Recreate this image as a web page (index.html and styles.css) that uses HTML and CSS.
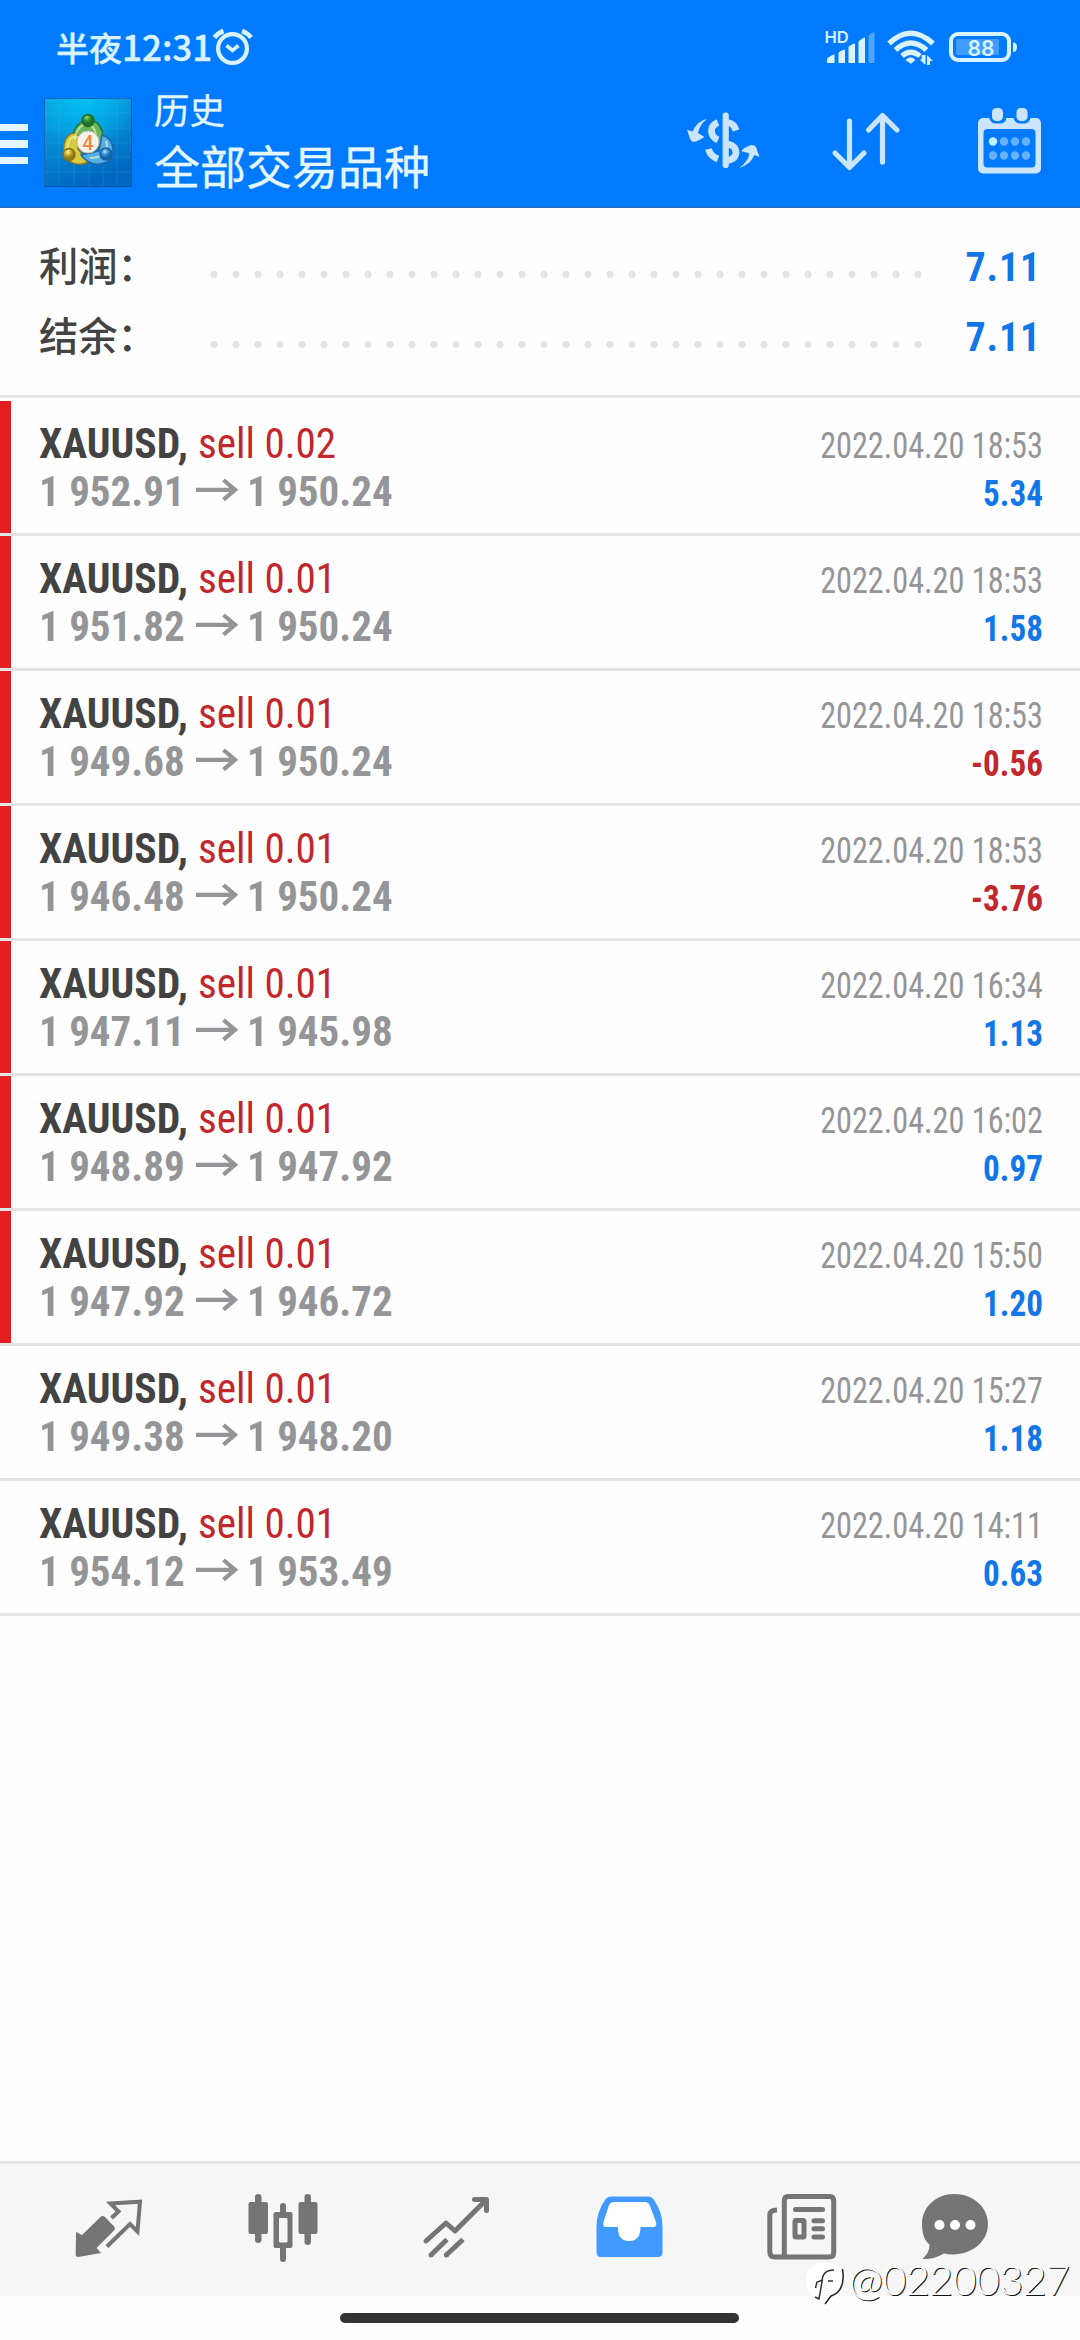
FILE: index.html
```html
<!DOCTYPE html>
<html lang="zh-CN">
<head>
<meta charset="utf-8">
<title>历史</title>
<link rel="stylesheet" href="styles.css">
</head>
<body>
<svg class="defs" width="0" height="0">
  <symbol id="arrow" viewBox="0 0 42 24"><path d="M0 11.8H39M27.5 2L39 11.8L27.5 21.6" fill="none" stroke="#939598" stroke-width="4.2"/></symbol>
</svg>
<div class="screen">
  <header class="header">
    <div class="status">
      <span class="clock">半夜<span class="digits">12:31</span></span>
      <svg class="alarm" width="42" height="40" viewBox="211 27 42 40" fill="none" stroke="#d8f3ff">
        <circle cx="231.500" cy="48.500" r="14.400" stroke-width="4.200"/>
        <path d="M225.500 45.500L231.500 50.500L237.500 45.500" stroke-width="3.600"/>
        <path d="M213.500 37.500Q217 33 222.500 31M241 31Q246.500 33 250 37.500" stroke-width="4.600"/>
      </svg>
      <svg class="indicators" width="200" height="44" viewBox="820 26 200 44" fill="#d8f3ff">
        <text x="824.500" y="43" class="hd">HD</text>
        <path d="M827 63V59Q829 56 834.500 54.500V63ZM838.500 63V53Q840 50.500 845 49.500V63ZM848.500 63V47Q850 44.500 855 43.500V63ZM858.500 63V42Q860 39 865 37.500V63Z"/>
        <path d="M868.500 63V36Q870 33 874.500 32V63Z" opacity=".36"/>
        <g fill="none" stroke="#d8f3ff" stroke-width="5.200">
          <path d="M889 43.500Q910.500 23 933 43.500M895.500 50Q910.500 36 926.500 50M902 56Q910.500 48.500 920 56"/>
        </g>
        <path d="M905.500 60Q910.500 54.500 915.500 60L911 63.800ZM921.700 55H925.500V65L919.500 59.500H921.700ZM927 65V55L933 61H930V65Z"/>
        <rect x="951" y="34" width="58" height="26" rx="7" fill="none" stroke="#d8f3ff" stroke-width="4"/>
        <rect x="956" y="39" width="43" height="16" rx="1" fill="#409dff"/>
        <path d="M1013 42.500Q1017 42.500 1017 47Q1017 52 1013 52Z"/>
        <text x="967.500" y="55.500" class="charge">88</text>
      </svg>
    </div>
    <div class="appbar">
      <div class="menu"><i></i><i></i><i></i></div>
      <svg class="logo" width="88" height="89" viewBox="0 0 88 89">
        <defs>
          <linearGradient id="sky" x2=".35" y2="1"><stop stop-color="#0ba5e0"/><stop offset=".5" stop-color="#058bd4"/><stop offset="1" stop-color="#0067be"/></linearGradient>
          <radialGradient id="glow" cx=".45" cy="0" r=".6"><stop stop-color="#00c0f4"/><stop offset="1" stop-color="#00c0f4" stop-opacity="0"/></radialGradient>
          <radialGradient id="green" cx=".4" cy=".25"><stop stop-color="#a4d58a"/><stop offset=".5" stop-color="#399c3d"/><stop offset="1" stop-color="#1e702c"/></radialGradient>
          <radialGradient id="gold" cx=".4" cy=".3"><stop stop-color="#fff3a5"/><stop offset=".5" stop-color="#ccb52e"/><stop offset="1" stop-color="#8d7a18"/></radialGradient>
          <radialGradient id="blue" cx=".4" cy=".3"><stop stop-color="#b8e6ff"/><stop offset=".5" stop-color="#3a94d8"/><stop offset="1" stop-color="#1665ac"/></radialGradient>
        </defs>
        <path fill="url(#sky)" d="M0 0H88V89H0Z"/><path fill="url(#glow)" d="M0 0H88V89H0Z"/>
        <path d="M15 0V89M30 0V89M45 0V89M59 0V89M73 0V89M0 15H88M0 30H88M0 45H88M0 59H88M0 74H88" stroke="#3fc2ff" opacity=".2"/>
        <path d="M0 .5H88M.5 0V89" stroke="#1768b6"/>
        <path d="M0 88.500H88M87.500 0V89" stroke="#0758aa"/>
        <g stroke-width="1.500">
          <path d="M28 42C30 16 60 15 59 42L55 50L43 36Z" fill="#68b65c" stroke="#237338"/>
          <path d="M33 35C18 33 16 58 25 63C31 67 38 67 44 64L34 51Z" fill="#d9cb3c" stroke="#8b7b20"/>
          <path d="M58 37C70 40 73 58 63 64C53 69 43 65 37 57L55 53Z" fill="#55aee5" stroke="#1c68a8"/>
          <path d="M31 42C33 22 50 22 52 37M23 53C24 39 29 38 35 39M62 43C65 50 61 60 46 60" fill="none" stroke="#e8f7bd" opacity=".65" stroke-width="2"/>
          <circle cx="44" cy="22.500" r="6" fill="url(#green)" stroke="#1e6e2c"/>
          <circle cx="25" cy="56.500" r="6" fill="url(#gold)" stroke="#857218"/>
          <circle cx="62" cy="56" r="6" fill="url(#blue)" stroke="#1463a6"/>
        </g>
        <circle cx="44" cy="44" r="11" fill="#f4f3ee" stroke="#c8bea6"/>
        <text x="44" y="51.500" class="four">4</text>
      </svg>
      <div class="titles"><div class="subtitle">历史</div><div class="title">全部交易品种</div></div>
      <div class="actions">
        <svg width="76" height="68" viewBox="684 106 76 68" fill="#cce5ff">
          <path d="M706 119Q699 124 697 133L703.500 137Q699 140 695 141.500Q690.500 143 689 139L686 129.500Q690 132 692 131Q696 121 706 119ZM738 168Q747 162 748.500 153.500L740 151Q744 147 750 145Q753.500 144.500 755 147L758.500 157L753.500 155Q749 165 738 168Z"/>
          <path d="M717 122.500Q710.500 125 710.500 131Q710.500 137 717 140M707.500 149Q709 156 717 159M727 122.500Q733 123.500 735 130.500M727 144Q735 146 735 152.500Q735 158.500 727 160.500" fill="none" stroke="#cce5ff" stroke-width="6.800"/>
          <path d="M724.700 115.500V165" stroke="#cce5ff" stroke-width="6.200" stroke-linecap="round"/>
        </svg>
        <svg class="sort" width="70" height="68" viewBox="830 106 70 68" fill="none" stroke="#cce5ff" stroke-width="5.200" stroke-linecap="round" stroke-linejoin="round">
          <path d="M848.500 121V167M834 153L848.500 167.500L863 153M881.500 162V116M867.500 130L881.500 115.500L896 130"/>
        </svg>
        <svg width="66" height="68" viewBox="976 106 66 68">
          <rect x="977" y="118" width="63" height="55.500" rx="5" fill="#cce5ff"/>
          <rect x="982.500" y="129" width="52" height="38.500" rx="4" fill="#007aff"/>
          <path d="M988 118H1005V120Q1003 123.500 999 123.500H995Q990 123.500 988 118ZM1012.500 118H1029.500Q1028 123.500 1023 123.500H1019Q1014 123.500 1012.500 118Z" fill="#007aff"/>
          <rect x="991" y="108" width="11" height="13" rx="4.500" fill="#cce5ff"/><rect x="1015.500" y="108" width="11" height="13" rx="4.500" fill="#cce5ff"/>
          <circle cx="992" cy="141.500" r="4.200" fill="#c2f0ff"/>
          <g fill="#66b2ff"><circle cx="1003" cy="141.500" r="4.200"/><circle cx="1014" cy="141.500" r="4.200"/><circle cx="1025" cy="141.500" r="4.200"/><circle cx="992" cy="155.500" r="4.200"/><circle cx="1003" cy="155.500" r="4.200"/><circle cx="1014" cy="155.500" r="4.200"/><circle cx="1025" cy="155.500" r="4.200"/></g>
        </svg>
      </div>
    </div>
  </header>

  <section class="summary">
    <div class="total"><span class="label">利润：</span><span class="dots"></span><b>7.11</b></div>
    <div class="total"><span class="label">结余：</span><span class="dots"></span><b>7.11</b></div>
  </section>

  <main class="deals">
    <div class="deal marked"><div class="left"><div class="name"><b>XAUUSD,</b><span>sell 0.02</span></div><div class="price"><span>1 952.91</span><svg><use href="#arrow"/></svg><span>1 950.24</span></div></div><div class="right"><div class="date">2022.04.20 18:53</div><div class="profit">5.34</div></div></div>
    <div class="deal marked"><div class="left"><div class="name"><b>XAUUSD,</b><span>sell 0.01</span></div><div class="price"><span>1 951.82</span><svg><use href="#arrow"/></svg><span>1 950.24</span></div></div><div class="right"><div class="date">2022.04.20 18:53</div><div class="profit">1.58</div></div></div>
    <div class="deal marked"><div class="left"><div class="name"><b>XAUUSD,</b><span>sell 0.01</span></div><div class="price"><span>1 949.68</span><svg><use href="#arrow"/></svg><span>1 950.24</span></div></div><div class="right"><div class="date">2022.04.20 18:53</div><div class="profit loss">-0.56</div></div></div>
    <div class="deal marked"><div class="left"><div class="name"><b>XAUUSD,</b><span>sell 0.01</span></div><div class="price"><span>1 946.48</span><svg><use href="#arrow"/></svg><span>1 950.24</span></div></div><div class="right"><div class="date">2022.04.20 18:53</div><div class="profit loss">-3.76</div></div></div>
    <div class="deal marked"><div class="left"><div class="name"><b>XAUUSD,</b><span>sell 0.01</span></div><div class="price"><span>1 947.11</span><svg><use href="#arrow"/></svg><span>1 945.98</span></div></div><div class="right"><div class="date">2022.04.20 16:34</div><div class="profit">1.13</div></div></div>
    <div class="deal marked"><div class="left"><div class="name"><b>XAUUSD,</b><span>sell 0.01</span></div><div class="price"><span>1 948.89</span><svg><use href="#arrow"/></svg><span>1 947.92</span></div></div><div class="right"><div class="date">2022.04.20 16:02</div><div class="profit">0.97</div></div></div>
    <div class="deal marked"><div class="left"><div class="name"><b>XAUUSD,</b><span>sell 0.01</span></div><div class="price"><span>1 947.92</span><svg><use href="#arrow"/></svg><span>1 946.72</span></div></div><div class="right"><div class="date">2022.04.20 15:50</div><div class="profit">1.20</div></div></div>
    <div class="deal"><div class="left"><div class="name"><b>XAUUSD,</b><span>sell 0.01</span></div><div class="price"><span>1 949.38</span><svg><use href="#arrow"/></svg><span>1 948.20</span></div></div><div class="right"><div class="date">2022.04.20 15:27</div><div class="profit">1.18</div></div></div>
    <div class="deal"><div class="left"><div class="name"><b>XAUUSD,</b><span>sell 0.01</span></div><div class="price"><span>1 954.12</span><svg><use href="#arrow"/></svg><span>1 953.49</span></div></div><div class="right"><div class="date">2022.04.20 14:11</div><div class="profit">0.63</div></div></div>
  </main>

  <nav class="tabs">
    <svg width="68" height="70" viewBox="75 53 68 70">
      <path d="M76 92L82 95L101 76.500Q103 75.500 105 77L114.500 87Q115.500 89 114 90.500L96.500 108L101 113L78 117Q76 117 75.700 115Z" fill="#757575"/>
      <path d="M111.500 78L118.500 71.500L110.500 63.500L140 61.700L137.500 91.500L130 84L107 106.500" fill="none" stroke="#757575" stroke-width="4"/>
    </svg>
    <svg width="70" height="70" viewBox="246 53 70 70" fill="#757575">
      <path d="M253 57Q253 54 256.300 54Q259.500 54 259.500 57V62H264Q266 62 266 64V92Q266 94 264 94H259.500V100Q259.500 103 256.300 103Q253 103 253 100V94H248.500Q246.500 94 246.500 92V64Q246.500 62 248.500 62H253ZM302.500 57Q302.500 54 305.700 54Q309 54 309 57V62H313.500Q315.500 62 315.500 64V92Q315.500 94 313.500 94H309V102Q309 105 305.700 105Q302.500 105 302.500 102V94H298.500Q296.500 94 296.500 92V64Q296.500 62 298.500 62H302.500Z"/>
      <path fill-rule="evenodd" d="M278 66Q278 63 281 63Q284 63 284 66V72H288.500Q290.500 72 290.500 74V106Q290.500 108 288.500 108H284V119Q284 122 281 122Q278 122 278 119V108H273.500Q271.500 108 271.500 106V74Q271.500 72 273.500 72H278ZM278 78Q277 78 277 79V101Q277 102.500 278 102.500H284Q285.500 102.500 285.500 101V79Q285.500 78 284 78Z"/>
    </svg>
    <svg width="68" height="70" viewBox="420 53 68 70" fill="none" stroke="#757575" stroke-width="5">
      <path d="M424 101L444 83L453 91L483 61" stroke-linejoin="round" stroke-linecap="round"/><path d="M472.500 59.500H484.500V70.500" stroke-linecap="round" stroke-linejoin="round"/><path d="M429 115L445 99.500M444.300 115L461 99.500"/><path d="M429 115h.1M444.300 115h.1" stroke-linecap="round"/>
    </svg>
    <svg width="68" height="70" viewBox="593 53 68 70">
      <path fill="#fff" d="M609 60H647L656 86L640 103H615L600 86Z"/>
      <path fill="#409aff" fill-rule="evenodd" d="M609 56.500H646Q650 56.500 652 60Q660.500 72 660.500 87V112Q660.500 117 656 117H599Q594.500 117 594.500 112V87Q594.500 72 603 60Q605 56.500 609 56.500ZM612 62Q608.500 62 607 65L601.500 82Q600.500 87 603.500 87H616Q615.500 101 627 101Q638.500 101 638.500 87H651Q655.500 87 654 82L648 66Q646.500 62 643 62Z"/>
    </svg>
    <svg width="70" height="70" viewBox="766 53 70 70" fill="none" stroke="#757575" stroke-width="5">
      <path d="M776 70Q768.800 70 768.800 75V112Q768.800 117 774 117H828Q832.700 117 832.700 113V61Q832.700 56.500 829 56.500H787Q783.300 56.500 783.300 61V117"/>
      <path d="M794.500 69.500H821.500M813 80.800H821.500M813 88.800H821.500M813 97H821.500" stroke-linecap="round"/>
      <rect x="794" y="80.500" width="9" height="16.500" rx="1"/>
    </svg>
    <svg class="chat" width="68" height="70" viewBox="919 53 68 70">
      <path d="M952.500 54C971 54 986 67 986 84C986 105 964 118 942 113.500Q932 119.500 920.500 119Q928 112 927.500 104.500C922 100 920 93 920 84C920 67 934 54 952.500 54Z" fill="#757575"/>
      <g fill="#fff"><circle cx="937.500" cy="85" r="5"/><circle cx="953" cy="85" r="5"/><circle cx="968.500" cy="85" r="5"/></g>
    </svg>
  </nav>
  <div class="gesture"></div>
  <svg class="watermark" width="276" height="56" viewBox="804 2254 276 56">
    <path d="M825 2263Q844 2263 844 2280Q844 2292 834 2297L825 2304V2300Q806 2298 806 2281Q806 2263 825 2263Z" fill="#fff"/>
    <path d="M815 2297L819 2299L822 2282Q822 2270 834 2270M815.500 2288L817 2282L823 2280M828 2281H833" fill="none" stroke="#333" stroke-width="1.500"/>
    <path d="M842.500 2269Q846 2291 831 2296L825 2304" fill="none" stroke="#222" stroke-width="1.500"/>
    <text x="849" y="2295" textLength="221" class="user">@02200327</text>
  </svg>
</div>
</body>
</html>
```
FILE: styles.css
```css
* { box-sizing: border-box; }
body { margin: 0; background: #fff; font-family: "Roboto Condensed", Roboto, "Noto Sans CJK SC", sans-serif; }
svg { display: block; flex: none; }
.defs { position: absolute; }
.screen { position: relative; width: 1080px; height: 2340px; display: flex; flex-direction: column; overflow: hidden; background: #fefefe; }

.header { height: 208px; background: #007aff; border-bottom: 2px solid #1870cc; color: #e4f7ff; font-family: "Noto Sans CJK SC", sans-serif; }
.status { height: 90px; display: flex; align-items: flex-start; padding: 26px 60px 0 56px; color: #d8f3ff; }
.clock { font-size: 33px; line-height: 40px; font-weight: 500; white-space: nowrap; width: 156px; -webkit-text-stroke: .4px #d8f3ff; }
.digits { font-size: 35px; }
.alarm { margin-top: 1px; }
.indicators { margin-left: auto; overflow: visible; }
.hd { font: 600 16.500px Inter, sans-serif; }
.charge { font: 600 21px Inter, sans-serif; }
.appbar { height: 116px; display: flex; align-items: flex-start; }
.menu { width: 44px; padding-top: 33.5px; display: flex; flex-direction: column; gap: 9px; }
.menu i { width: 27.5px; height: 7.5px; background: #e4f7ff; }
.logo { margin-top: 7.500px; }
.four { font: 500 20px Roboto, sans-serif; fill: #ef8a3c; text-anchor: middle; }
.titles { margin-left: 22px; padding-top: 1px; -webkit-text-stroke: .3px #e4f7ff; }
.subtitle { font-size: 35.500px; line-height: 36px; }
.title { font-size: 46px; line-height: 46px; margin-top: 14px; }
.actions { margin-left: auto; padding: 16px 37px 0 0; display: flex; }
.sort { margin: 0 76px 0 70px; }

.summary { height: 190px; padding: 21px 39px 0 39px; border-bottom: 3px solid #e4e4e4; flex: none; }
.total { height: 70px; display: flex; align-items: baseline; line-height: 70px; }
.label { font: 500 39.300px/70px "Noto Sans CJK SC", sans-serif; color: #434343; width: 163.500px; white-space: nowrap; }
.dots { align-self: flex-start; margin-top: 42px; width: 726px; height: 7px; background: radial-gradient(circle at center, #e3e3e3 3.200px, transparent 3.900px) 0 0 / 22px 7px repeat-x; }
.total b { margin-left: auto; font-size: 40px; font-stretch: 75%; color: #1177e8; letter-spacing: .8px; }

.deals { padding-top: 3px; flex: 1; font-stretch: 75%; }
.deal { height: 135px; border-bottom: 3px solid #e4e4e4; display: flex; justify-content: space-between; padding: 18px 37.500px 0 39px; line-height: 48px; white-space: nowrap; }
.marked { background: linear-gradient(#e21e20, #e21e20) 0 0 / 11px 132px no-repeat; }
.name { font-size: 43px; color: #434343; height: 48px; display: flex; }
.name b { width: 158.500px; transform: scaleX(.968); transform-origin: left; }
.name span { color: #c1272d; transform: scaleX(.957); transform-origin: left; }
.price { font-size: 43px; font-weight: 700; color: #939598; display: flex; height: 48px; }
.price span { width: 157px; transform: scaleX(.953); transform-origin: left; }
.price svg { width: 42px; height: 24px; margin: 11px 9px 0 0; }
.right { padding-top: 3px; text-align: right; font-size: 36px; }
.date { color: #939598; height: 48px; transform: scaleX(.895); transform-origin: right; }
.profit { color: #1177e8; font-weight: 700; transform: scaleX(.92); transform-origin: right; }
.profit.loss { color: #c1272d; }

.tabs { height: 135px; flex: none; background: #f6f6f6; border-top: 3px solid #e4e4e4; display: flex; gap: 104.500px; align-items: center; padding: 0 0 4px 75px; }
.chat { margin-left: -20.500px; }
.gesture { width: 399px; height: 10px; border-radius: 5px; background: #333; margin: 17px 0 17px 340px; flex: none; }
.watermark { position: absolute; left: 804px; top: 2254px; overflow: visible; }
.user { font: 300 41px Lato, sans-serif; fill: #fff; text-shadow: 1px 1px 0 #111; }
```
